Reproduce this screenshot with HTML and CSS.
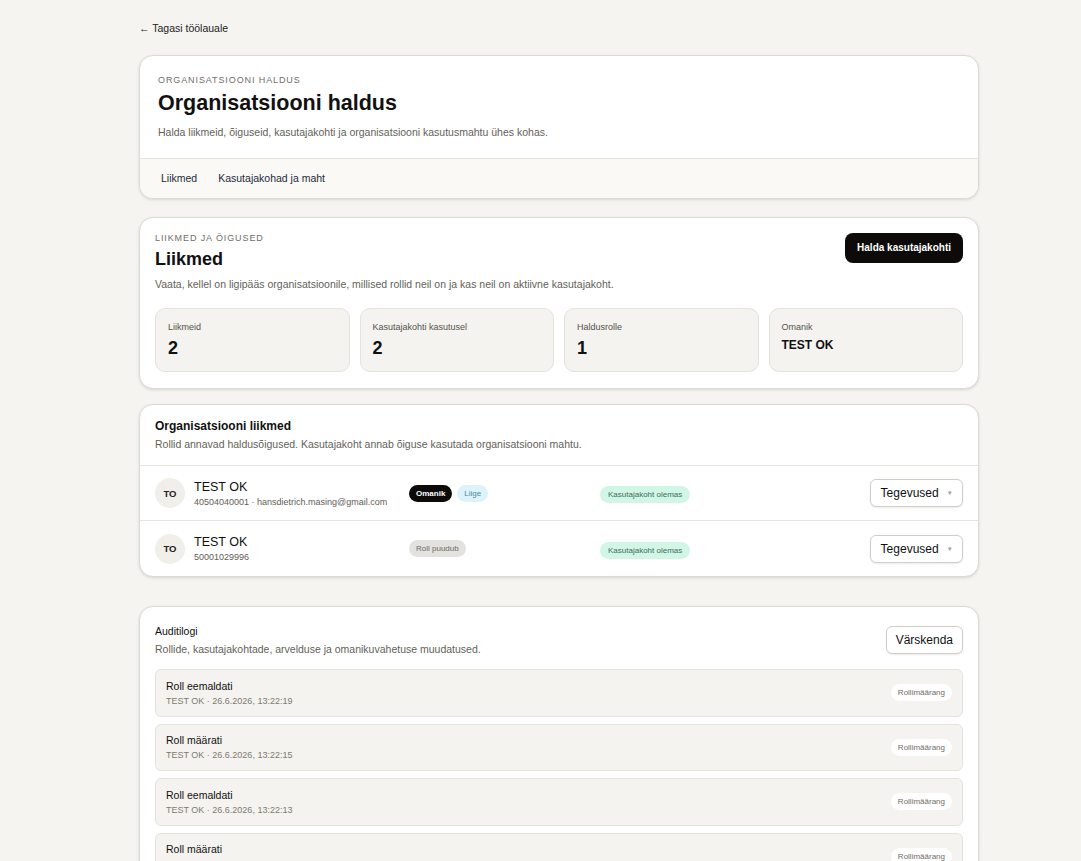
FILE: index.html
```html
<!DOCTYPE html>
<html lang="et">
<head>
    <meta charset="UTF-8">
    <meta name="viewport" content="width=device-width, initial-scale=1.0">
    <title>Organisatsiooni haldus</title>
    <link rel="stylesheet" href="styles.css">
</head>
<body>
<main class="page">

    <a href="#" class="back-link">&larr; Tagasi töölauale</a>

    <!-- Page header -->
    <section class="card header-card">
        <div class="header-body">
            <div class="eyebrow">Organisatsiooni haldus</div>
            <h1>Organisatsiooni haldus</h1>
            <p class="muted">Halda liikmeid, õiguseid, kasutajakohti ja organisatsiooni kasutusmahtu ühes kohas.</p>
        </div>
        <nav class="tabs">
            <a href="#" class="tab">Liikmed</a>
            <a href="#" class="tab">Kasutajakohad ja maht</a>
        </nav>
    </section>

    <!-- Summary -->
    <section class="card summary-card">
        <div class="summary-top">
            <div>
                <div class="eyebrow">Liikmed ja õigused</div>
                <h2>Liikmed</h2>
                <p class="muted">Vaata, kellel on ligipääs organisatsioonile, millised rollid neil on ja kas neil on aktiivne kasutajakoht.</p>
            </div>
            <button class="btn-dark">Halda kasutajakohti</button>
        </div>
        <div class="stats">
            <div class="stat">
                <div class="stat-label">Liikmeid</div>
                <div class="stat-value">2</div>
            </div>
            <div class="stat">
                <div class="stat-label">Kasutajakohti kasutusel</div>
                <div class="stat-value">2</div>
            </div>
            <div class="stat">
                <div class="stat-label">Haldusrolle</div>
                <div class="stat-value">1</div>
            </div>
            <div class="stat">
                <div class="stat-label">Omanik</div>
                <div class="stat-value small">TEST OK</div>
            </div>
        </div>
    </section>

    <!-- Members -->
    <section class="card members-card">
        <div class="members-head">
            <h3>Organisatsiooni liikmed</h3>
            <p class="muted">Rollid annavad haldusõigused. Kasutajakoht annab õiguse kasutada organisatsiooni mahtu.</p>
        </div>

        <div class="member-row">
            <div class="member">
                <div class="avatar">TO</div>
                <div>
                    <div class="member-name">TEST OK</div>
                    <div class="member-sub">40504040001 · hansdietrich.masing@gmail.com</div>
                </div>
            </div>
            <div class="badges">
                <span class="pill pill-owner">Omanik</span>
                <span class="pill pill-member">Liige</span>
            </div>
            <div><span class="pill pill-seat">Kasutajakoht olemas</span></div>
            <button class="btn-outline">Tegevused <span class="caret">▾</span></button>
        </div>

        <div class="member-row">
            <div class="member">
                <div class="avatar">TO</div>
                <div>
                    <div class="member-name">TEST OK</div>
                    <div class="member-sub">50001029996</div>
                </div>
            </div>
            <div class="badges">
                <span class="pill pill-none">Roll puudub</span>
            </div>
            <div><span class="pill pill-seat">Kasutajakoht olemas</span></div>
            <button class="btn-outline">Tegevused <span class="caret">▾</span></button>
        </div>
    </section>

    <!-- Audit log -->
    <section class="card audit-card">
        <div class="audit-head">
            <div>
                <h4>Auditilogi</h4>
                <p class="muted">Rollide, kasutajakohtade, arvelduse ja omanikuvahetuse muudatused.</p>
            </div>
            <button class="btn-outline btn-refresh">Värskenda</button>
        </div>

        <div class="audit-list">
            <div class="audit-item">
                <div>
                    <div class="audit-title">Roll eemaldati</div>
                    <div class="audit-sub">TEST OK · 26.6.2026, 13:22:19</div>
                </div>
                <span class="pill pill-type">Rollimäärang</span>
            </div>
            <div class="audit-item">
                <div>
                    <div class="audit-title">Roll määrati</div>
                    <div class="audit-sub">TEST OK · 26.6.2026, 13:22:15</div>
                </div>
                <span class="pill pill-type">Rollimäärang</span>
            </div>
            <div class="audit-item">
                <div>
                    <div class="audit-title">Roll eemaldati</div>
                    <div class="audit-sub">TEST OK · 26.6.2026, 13:22:13</div>
                </div>
                <span class="pill pill-type">Rollimäärang</span>
            </div>
            <div class="audit-item">
                <div>
                    <div class="audit-title">Roll määrati</div>
                    <div class="audit-sub">TEST OK · 26.6.2026, 13:22:10</div>
                </div>
                <span class="pill pill-type">Rollimäärang</span>
            </div>
        </div>
    </section>

</main>
</body>
</html>
```

FILE: styles.css
```css
/* Base */
body {
    font-family: "Liberation Sans", Arial, sans-serif;
    background: #f5f4f0;
    color: #111;
    margin: 0;
    padding: 0;
}

.page {
    width: 840px;
    margin-left: 139px;
    padding: 18px 0 40px;
}

.back-link {
    display: inline-block;
    font-size: 10.5px;
    color: #222;
    text-decoration: none;
    margin-bottom: 21px;
}

/* Cards */
.card {
    background: #fff;
    border: 1px solid #dcdad5;
    border-radius: 14px;
    box-shadow: 0 1px 3px rgba(0, 0, 0, 0.12);
    margin-bottom: 18px;
    overflow: hidden;
}

.eyebrow {
    font-size: 9px;
    letter-spacing: 0.9px;
    text-transform: uppercase;
    color: #6f6d69;
}

.muted {
    font-size: 10.5px;
    color: #625f5a;
    margin: 0;
}

/* Header card */
.header-body {
    padding: 19px 18px 20px;
}

.header-card h1 {
    font-size: 21.5px;
    font-weight: bold;
    margin: 6px 0 10px;
}

.tabs {
    display: flex;
    gap: 21px;
    padding: 13px 21px 14px;
    border-top: 1px solid #e6e4df;
    background: #faf9f6;
}

.tab {
    font-size: 10.5px;
    color: #1e2a3a;
    text-decoration: none;
}

/* Summary card */
.summary-card {
    padding: 15px 15px 16px;
    margin-bottom: 15px;
}

.summary-top {
    display: flex;
    justify-content: space-between;
    align-items: flex-start;
}

.summary-card h2 {
    font-size: 18px;
    margin: 6px 0 8px;
}

.btn-dark {
    font-family: inherit;
    background: #0c0b0a;
    color: #fff;
    border: none;
    border-radius: 8px;
    font-size: 10px;
    font-weight: bold;
    padding: 9px 12px 10px;
    cursor: pointer;
}

.stats {
    display: grid;
    grid-template-columns: repeat(4, 1fr);
    gap: 10px;
    margin-top: 18px;
}

.stat {
    background: #f4f3ef;
    border: 1px solid #e4e2dd;
    border-radius: 10px;
    height: 64px;
    padding: 13px 12px 0;
    box-sizing: border-box;
}

.stat-label {
    font-size: 9px;
    color: #55524d;
}

.stat-value {
    font-size: 18px;
    font-weight: bold;
    margin-top: 6px;
}

.stat-value.small {
    font-size: 12px;
    margin-top: 6px;
}

/* Members card */
.members-head {
    padding: 14px 15px 15px;
    border-bottom: 1px solid #e6e4df;
}

.members-head h3 {
    font-size: 12px;
    margin: 0 0 5px;
}

.member-row {
    display: grid;
    grid-template-columns: 254px 191px 1fr auto;
    align-items: center;
    height: 55px;
    box-sizing: border-box;
    padding: 0 15px;
    border-bottom: 1px solid #e6e4df;
}

.member-row:last-child {
    border-bottom: none;
}

.member {
    display: flex;
    align-items: center;
    gap: 9px;
}

.avatar {
    width: 30px;
    height: 30px;
    border-radius: 50%;
    background: #f1efea;
    display: flex;
    align-items: center;
    justify-content: center;
    font-size: 9.5px;
    font-weight: bold;
    color: #222;
}

.member-name {
    font-size: 12.5px;
    margin-bottom: 3px;
}

.member-sub {
    font-size: 9px;
    color: #5f5c57;
}

.badges {
    display: flex;
    gap: 5px;
}

.pill {
    display: inline-block;
    border-radius: 999px;
    font-size: 8px;
    padding: 4px 7px;
    line-height: 9px;
}

.pill-owner {
    background: #0c0b0a;
    color: #fff;
    font-weight: bold;
}

.pill-member {
    background: #dcf3fb;
    color: #4e8aa3;
}

.pill-none {
    background: #e4e2de;
    color: #6b6863;
}

.pill-seat {
    background: #d2f6e5;
    color: #3b6d5b;
    padding: 4px 8px;
}

.pill-type {
    background: #fff;
    color: #6f6d69;
}

.btn-outline {
    font-family: inherit;
    background: #fff;
    border: 1px solid #cfcdc8;
    border-radius: 6px;
    box-shadow: 0 1px 2px rgba(0, 0, 0, 0.08);
    font-size: 12px;
    color: #111;
    padding: 6px 10px 6px 10px;
    cursor: pointer;
}

.caret {
    font-size: 7px;
    color: #999;
    margin-left: 6px;
    vertical-align: 2px;
}

/* Audit card */
.audit-card {
    margin-top: 29px;
    padding: 18px 15px 16px;
}

.audit-head {
    display: flex;
    justify-content: space-between;
    align-items: flex-start;
}

.audit-head h4 {
    font-size: 10.5px;
    font-weight: normal;
    margin: 0 0 6px;
}

.btn-refresh {
    margin-top: 1px;
    padding: 6px 9px;
}

.audit-list {
    display: flex;
    flex-direction: column;
    gap: 7px;
    margin-top: 14px;
}

.audit-item {
    display: flex;
    justify-content: space-between;
    align-items: center;
    background: #f4f3ef;
    border: 1px solid #e4e2dd;
    border-radius: 6px;
    height: 47.5px;
    padding: 0 10px;
    box-sizing: border-box;
}

.audit-title {
    font-size: 10.5px;
    margin-bottom: 4px;
}

.audit-sub {
    font-size: 9px;
    color: #7f7a70;
}
```
